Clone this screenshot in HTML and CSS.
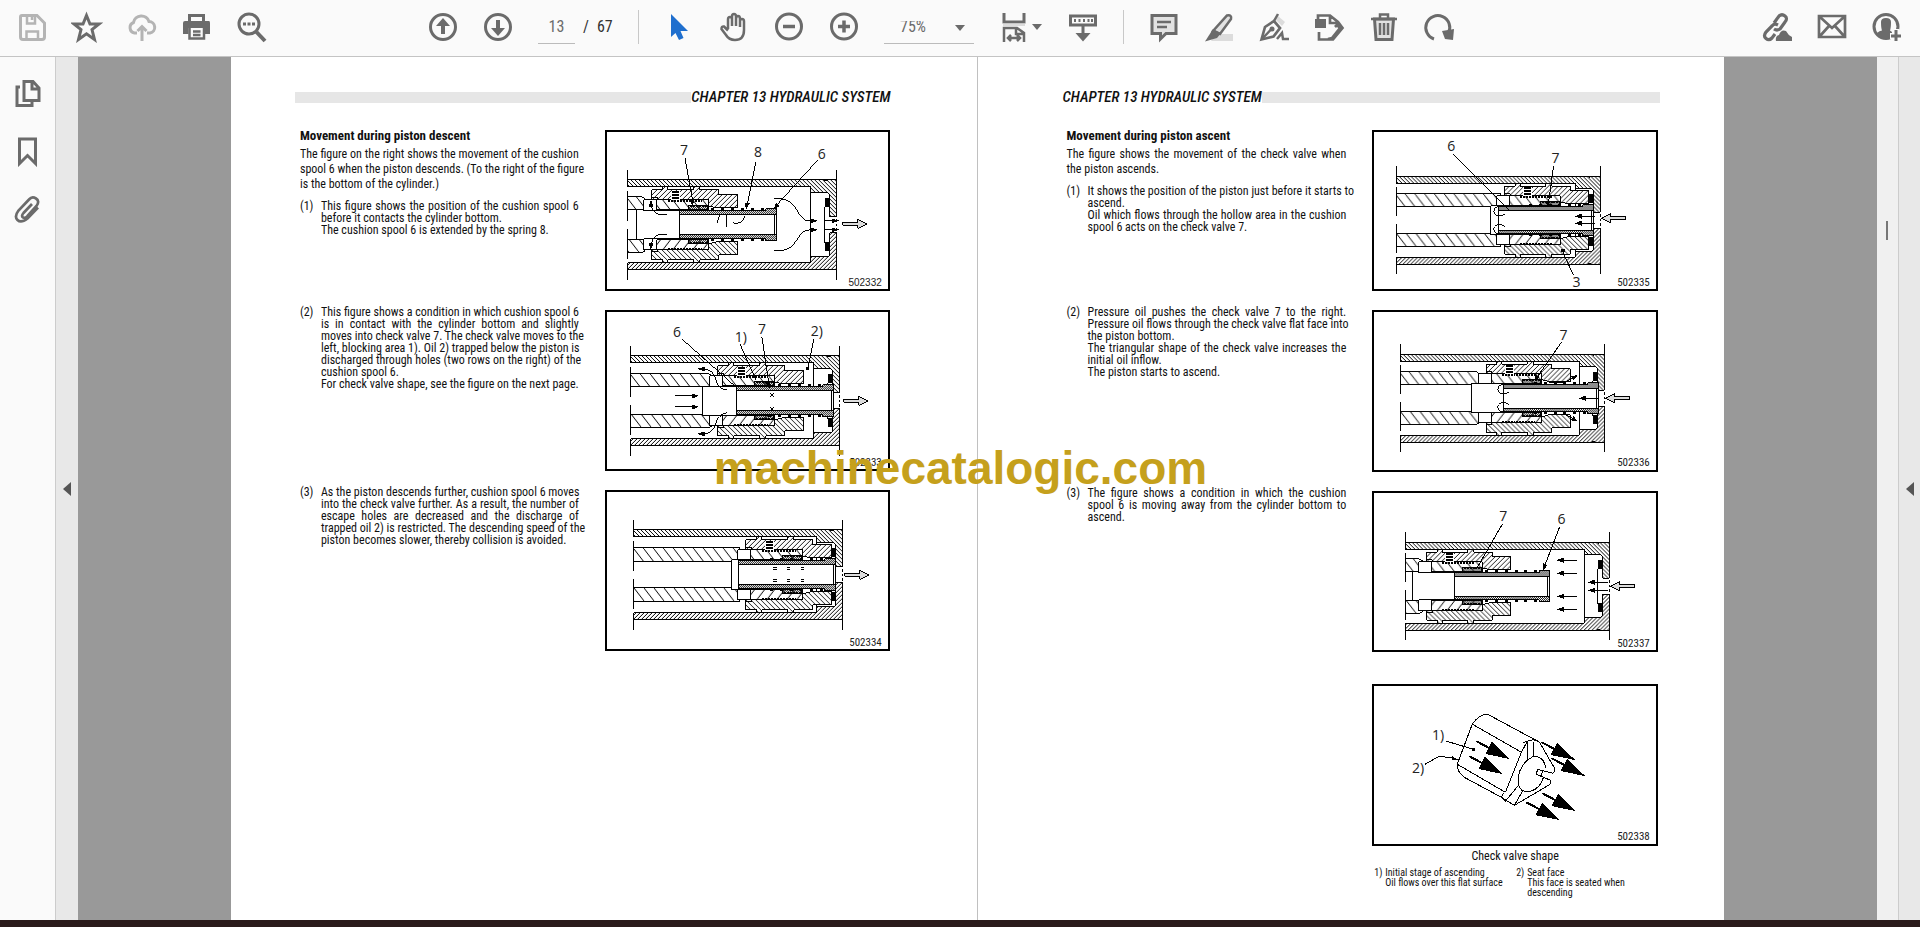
FILE: index.html
```html
<!DOCTYPE html>
<html lang="en">
<head>
<meta charset="utf-8">
<title>Chapter 13 Hydraulic System</title>
<link rel="stylesheet" href="styles.css">
</head>
<body>
<svg class="defs" aria-hidden="true">
  <defs>
    <pattern id="hx-wall" width="4" height="4" patternUnits="userSpaceOnUse"><path d="M-1 -1L5 5M-1 3L1 5M3 -1L5 1" stroke="#000" stroke-width="1"/></pattern>
    <pattern id="hx-head" width="5" height="5" patternUnits="userSpaceOnUse"><path d="M-1 6L6 -1M-1 1L1 -1M4 6L6 4" stroke="#000" stroke-width=".9"/></pattern>
    <pattern id="hx-rod" width="10" height="13" patternUnits="userSpaceOnUse"><path d="M0 0L10 13" stroke="#000" stroke-width="1"/></pattern>
    <pattern id="hx-dense" width="2" height="2" patternUnits="userSpaceOnUse"><path d="M0 2L2 0M-1 1L1 -1M1 3L3 1" stroke="#000" stroke-width=".9"/></pattern>

    <g id="tube-half">
      <path d="M0 -45H209V-8H202V-30L200 -32H183V-38H0Z" fill="url(#hx-wall)"/>
      <path d="M0 -45H196L198 -44L200 -45H209M209 -8H202V-30L200 -32H183V-38H0"/>
      <path d="M183 -38V0M197 0V-18H202M209 -45V-55M0 -55V-38M0 -34V-22M0 -18V-4"/>
      <path d="M209 -6V0" stroke-dasharray="3 2"/>
      <rect x="198" y="-26" width="3" height="8" fill="#000"/>
    </g>
    <g id="tube"><use href="#tube-half"/><use href="#tube-half" transform="scale(1 -1)"/></g>

    <g id="head-half">
      <path d="M-8 -25H57V-14H-8Z" fill="#fff"/>
      <path d="M5 -25H57V-15H5Z" fill="url(#hx-rod)"/>
      <path d="M0 -35H11V-38H16V-35H42V-38H48V-35H67V-30H86V-17H64L57 -19V-25H0Z" fill="#fff"/>
      <path d="M0 -35H11V-38H16V-35H42V-38H48V-35H67V-30H86V-17H64L57 -19V-25H0Z" fill="url(#hx-head)"/>
      <path d="M0 -27H6V-25"/>
      <path d="M16 -24H50" stroke-width="2" stroke-dasharray="2 1"/>
      <rect x="37" y="-19" width="19" height="5" fill="url(#hx-dense)"/>
      <path d="M38 -18H55M38 -15H55" stroke-dasharray="2 1"/>
    </g>
    <g id="head">
      <use href="#head-half"/><use href="#head-half" transform="scale(1 -1)"/>
      <rect x="19" y="-34" width="9" height="9" fill="#fff" stroke="none"/>
      <path d="M20 -33H27M20 -30H27M20 -27H27" stroke-width="2"/>
    </g>

    <g id="spool-half">
      <path d="M0 -14H86V-16H97V-10H0Z" fill="#fff"/>
      <path d="M0 -14H86V-16H97V-10H0Z" fill="url(#hx-dense)"/>
      <path d="M31 -15h3M41 -15h3M51 -15h3M61 -15h3M71 -15h3M81 -15h3" stroke-width="3"/>
    </g>
    <g id="spool">
      <rect x="0" y="-14" width="97" height="28" fill="#fff"/>
      <use href="#spool-half"/><use href="#spool-half" transform="scale(1 -1)"/>
      <path d="M95 -10V10"/>
    </g>

    <g id="tip" stroke="none" fill="#000"><path d="M0 0L-7 -2.5V2.5Z"/></g>
    <g id="flow"><path d="M0 0H22"/><use href="#tip" x="24"/></g>
    <g id="flow-in"><path d="M6 0H20"/><path d="M0 0L7 -2.5V2.5Z" fill="#000" stroke="none"/></g>
    <g id="port"><path d="M0 -1.5H15V-4.5L24 0L15 4.5V1.5H0Z" fill="#ddd"/></g>
    <g id="big" stroke="none" fill="#000"><path d="M0 -1H14V-7L38 0L14 7V1H0Z"/></g>
    <g id="curl"><path d="M8 -6C3 -3 -3 -5 -3 -9Q-3 -13 2 -14"/><path d="M8 6C3 3 -3 5 -3 9Q-3 13 2 14"/></g>
  </defs>
</svg>

<header class="toolbar">
  <div class="tools">
    <button class="tool faint" aria-label="Save"><svg viewBox="0 0 32 32"><path d="M4.500 6Q4.500 4.500 6 4.500H21L28.500 12V26Q28.500 28.500 26 28.500H7Q4.500 28.500 4.500 26Z"/><path d="M11 5V12.500H19V5M16 6V9M10.500 28V20.500H22V28" stroke-width="2.500"/></svg></button>
    <button class="tool" aria-label="Star"><svg viewBox="0 0 32 32"><path d="M15.500 4.500L19 13H28L21 18.500L23.500 28.500L15.500 22.800L7.500 28.500L10 18.500L3 13H12Z"/></svg></button>
    <button class="tool faint" aria-label="Upload to cloud"><svg viewBox="0 0 32 32"><path d="M11 22H8.500A5.500 5.500 0 0 1 7.500 11.500A8 8 0 0 1 23 10.500A5.800 5.800 0 0 1 24 22H21M16 30V17M11.500 20L16 15.500L20.500 20"/></svg></button>
    <button class="tool" aria-label="Print"><svg viewBox="0 0 32 32"><path d="M8.500 10V4.500H22.500V10"/><path class="fill" d="M4 10H28Q29 10 29 12V23H24V17H7.500V23H2V12Q2 10 4 10Z"/><path d="M8.500 17V27.500H23V17M12 20.500H19.500M12 24H19.500" stroke-width="2.500"/></svg></button>
    <button class="tool" aria-label="Find"><svg viewBox="0 0 32 32"><circle cx="13" cy="13" r="10"/><path d="M20.500 21L29 30" stroke-width="4"/><path class="fill" d="M7 11.500h3v3H7zM11.500 11.500h3v3h-3zM16 11.500h3v3h-3z"/></svg></button>
  </div>
  <div class="tools">
    <button class="tool" aria-label="Previous page"><svg viewBox="0 0 32 32"><circle cx="16" cy="16" r="12.500"/><path d="M16 23V11" stroke-width="4"/><path class="fill" d="M16 7L23 15H9Z"/></svg></button>
    <button class="tool" aria-label="Next page"><svg viewBox="0 0 32 32"><circle cx="16" cy="16" r="12.500"/><path d="M16 9V20" stroke-width="4"/><path class="fill" d="M16 25L23 17H9Z"/></svg></button>
    <label class="pager"><input class="page-no" type="text" value="13" aria-label="Page number"><span class="slash">/</span><span>67</span></label>
  </div>
  <div class="tools divided">
    <button class="tool" aria-label="Select"><svg viewBox="0 0 32 32"><path class="blue" d="M8 3V26L12.500 22L16 29L20.500 27L17.500 20H25Z"/></svg></button>
    <button class="tool" aria-label="Hand"><svg viewBox="0 0 32 32"><path d="M10 18V8.500Q10 6 12 6T14 8.500V15M14 8V5.500Q14 3 16 3T18 5.500V15M18 8Q18 5 20 5T22 8V16M22 10Q22 8 24 8T26 10.500V19Q26 29 17 29Q11 29 8 24L3.500 18Q3.500 15 6 15.500L10 19.500" stroke-width="2.500"/></svg></button>
    <button class="tool" aria-label="Zoom out"><svg viewBox="0 0 32 32"><circle cx="16" cy="15.500" r="12.500"/><path d="M10 15.500H22" stroke-width="3.500"/></svg></button>
    <button class="tool" aria-label="Zoom in"><svg viewBox="0 0 32 32"><circle cx="16" cy="15.500" r="12.500"/><path d="M10 15.500H22M16 9.500V21.500" stroke-width="3.500"/></svg></button>
    <span class="zoom"><select aria-label="Zoom level"><option>75%</option></select></span>
    <button class="tool wide" aria-label="Fit page"><svg viewBox="0 0 32 32"><path d="M6 2V11H26V2" /><path class="soft" d="M5 12.500H27V15H5Z"/><path d="M6 31V17H19L26 22V31M18 17V23H26M11 27H21M13 24L10 27L13 30M19 24L22 27L19 30" stroke-width="2.500"/></svg><span class="caret"></span></button>
    <button class="tool" aria-label="Scrolling"><svg viewBox="0 0 32 32"><rect x="3.500" y="5" width="25" height="9"/><path d="M8 8V11M12.500 8V11M17 8V11M21.500 8V11M25 8V11" stroke-width="2"/><path d="M16 14V25" /><path class="fill" d="M8.500 22H23.500L16 30.500Z"/></svg></button>
  </div>
  <div class="tools divided">
    <button class="tool" aria-label="Comment"><svg viewBox="0 0 32 32"><path class="tint" d="M4 4.500H28V22.500H18L12.500 28V22.500H4Z"/><path d="M9 11H23M9 16H19" stroke-width="2.500"/></svg></button>
    <button class="tool" aria-label="Highlight"><svg viewBox="0 0 32 32"><path class="soft" d="M13 23H30V30H8Z"/><path class="tint" d="M24 4.500Q29 3.500 28 8L17 23L10 20Z" stroke-width="2.500"/><path class="fill" d="M10 18L18 22L14 27L2 30.500Z"/></svg></button>
    <button class="tool" aria-label="Sign"><svg viewBox="0 0 32 32"><path class="soft" d="M20 5L27 11L24 15L18 9Z"/><path d="M3.500 28.500L7 16L16 10L22 17L15.500 25.500Z" stroke-width="2.700"/><path d="M4 28L13 18.500M16 10L20 3M19 28L24 22L25 28H31" stroke-width="2.500"/><circle class="fill" cx="14" cy="18" r="2.500"/></svg></button>
    <button class="tool" aria-label="Stamp"><svg viewBox="0 0 32 32"><path class="fill" d="M2 8H13V17H2Z"/><path d="M5 9V4.500H17L25 11L29.500 17L20 28.500H6V21M17 5V12H24M22 16L24 14L27 17L19 27L15 28" stroke-width="2.700"/></svg></button>
    <button class="tool" aria-label="Delete"><svg viewBox="0 0 32 32"><path class="tint" d="M6.500 8H25.500L24 28.500H8Z"/><path d="M3 8H29M12 7V3.500H20V7M12 12V24M16 12V24M20 12V24" stroke-width="2.500"/></svg></button>
    <button class="tool" aria-label="Rotate"><svg viewBox="0 0 32 32"><path d="M11 28A12 12 0 1 1 25.500 22"/><path class="fill" d="M19 20L31 18L30 29L22 28Z"/></svg></button>
  </div>
  <div class="tools share">
    <button class="tool" aria-label="Share link"><svg viewBox="0 0 32 32"><path d="M13 12L18 5Q21 2.500 24 5T24 11L19 18Q16 20 13 18M17 14Q13 12 11 15L5 21Q2 25 5 27.500T11 27L14 23" stroke-width="3.200"/><path class="fill" d="M15 30Q14 25 18 24Q20 18 25 20Q27 24 31 26V30Z"/></svg></button>
    <button class="tool" aria-label="Email"><svg viewBox="0 0 32 32"><path d="M3 5H29V26H3ZM4 6L16 17L28 6M4 25L13 15M28 25L19 15" stroke-width="2.700"/></svg></button>
    <button class="tool" aria-label="Add person"><svg viewBox="0 0 32 32"><circle cx="15" cy="15.500" r="12"/><path class="fill" d="M6 24Q5 21 11 19.500Q10 17 10 11Q10 7 15 7T20 11Q20 17 19 19.500L21 21V27H10Z"/><path d="M25 18V31M19 25H31" stroke="#fafafa" stroke-width="6"/><path d="M25 19V30M20 25H30"/></svg></button>
  </div>
</header>

<div class="workspace">
  <nav class="rail">
    <button class="tool" aria-label="Page thumbnails"><svg viewBox="0 0 32 32"><path d="M12 4.500H21L27 11V23.500H12ZM20 5V12H27M8 10H5V28.500H20V25"/></svg></button>
    <button class="tool" aria-label="Bookmarks"><svg viewBox="0 0 32 32"><path d="M7.500 4H23.500V28.500L15.500 20.500L7.500 28.500Z"/></svg></button>
    <button class="tool" aria-label="Attachments"><svg viewBox="0 0 32 32"><path d="M20 11L11.500 20Q9 23 11 24.500T15.500 23L24.500 13Q28 8 24 5.500T17 6.500L6.500 17.500Q2 23.500 5.500 27T15.500 25.500L26 14.500" stroke-width="2.700"/></svg></button>
  </nav>
  <button class="edge" aria-label="Open navigation pane"><span class="arrow"></span></button>

  <main class="viewer">
    <div class="spread">
      <article class="page left">
        <header class="running"><span class="bar"></span><h1>CHAPTER 13 HYDRAULIC SYSTEM</h1></header>
        <div class="content">
          <section class="row">
            <div>
              <h2>Movement during piston descent</h2>
              <p class="intro"><span class="j">The figure on the right shows the movement of the cushion</span><span class="j">spool 6 when the piston descends. (To the right of the figure</span><span>is the bottom of the cylinder.)</span></p>
              <div class="item"><span>(1)</span><p><span class="j">This figure shows the position of the cushion spool 6</span><span>before it contacts the cylinder bottom.</span><span>The cushion spool 6 is extended by the spring 8.</span></p></div>
            </div>
            <figure>
              <svg class="drawing" viewBox="2 2 281 157">
                <g transform="translate(23 95)">
                  <use href="#tube"/>
                  <path d="M0 -28H14L17 -26V-15H0ZM0 28H14L17 26V15H0Z" fill="url(#hx-rod)"/><path d="M0 -15H9V15H0M9 -15H60M9 15H60"/>
                </g>
                <use href="#head" x="47" y="95"/><use href="#spool" x="75" y="95"/>
                <path d="M62 84C54 86 47 84 46 73M62 105C54 103 47 105 46 117M80 28L88 72M151 32L142 76M213 30L171 76"/>
                <path d="M169 69C195 66 190 91 205 91M169 121C195 123 190 100 205 100M112 93L115 85M122 85V97M128 93Q138 95 140 86"/>
                <path class="solid" d="M46 70l-2.500 7h5zM46 120l-2.500 -7h5zM88 76l-4 -6h5zM141 80l-1 -7h5zM169 79l2 -6 4 3z"/>
                <use href="#tip" x="213" y="91"/><use href="#tip" x="213" y="100"/><path d="M220 91H234M220 100H234"/><use href="#tip" x="234" y="91"/><use href="#tip" x="234" y="100"/>
                <use href="#port" x="238" y="94"/>
                <text x="79" y="25">7</text><text x="153" y="27">8</text><text x="217" y="29">6</text>
                <text class="code arial" x="277" y="156">502332</text>
              </svg>
            </figure>
          </section>
          <section class="row">
            <div class="item"><span>(2)</span><p><span class="j">This figure shows a condition in which cushion spool 6</span><span class="j">is in contact with the cylinder bottom and slightly</span><span class="j">moves into check valve 7. The check valve moves to the</span><span class="j">left, blocking area 1). Oil 2) trapped below the piston is</span><span class="j">discharged through holes (two rows on the right) of the</span><span>cushion spool 6.</span><span>For check valve shape, see the figure on the next page.</span></p></div>
            <figure>
              <svg class="drawing" viewBox="2 2 281 157">
                <g transform="translate(26 91)">
                  <use href="#tube"/>
                  <path d="M0 -27H78L83 -24V-14H0ZM0 27H78L83 24V14H0Z" fill="url(#hx-rod)"/>
                </g>
                <use href="#head" x="113" y="91"/>
                <path d="M133 77H98V106H133" fill="#fff"/>
                <use href="#spool" x="132" y="91"/>
                <path d="M122 80C106 78 116 60 98 59M122 103C106 105 116 123 98 124M77 29L131 77M135 34L151 70M157 27L164 74M209 29L203 58"/>
                <path class="solid" d="M92 59l8 -2.500v5zM92 124l8 -2.500v5zM165 78l-5 -6h5zM201 57h3v3h-3z"/>
                <use href="#flow" x="70" y="86"/><use href="#flow" x="70" y="97"/>
                <path d="M165 83l4 4M169 83l-4 4M165 97l4 4M169 97l-4 4"/>
                <use href="#port" x="239" y="91"/>
                <text x="72" y="27">6</text><text x="136" y="32">1)</text><text x="157" y="24">7</text><text x="212" y="26">2)</text>
                <text class="code" x="277" y="156">502333</text>
              </svg>
            </figure>
          </section>
          <section class="row">
            <div class="item"><span>(3)</span><p><span class="j">As the piston descends further, cushion spool 6 moves</span><span class="j">into the check valve further. As a result, the number of</span><span class="j">escape holes are decreased and the discharge of</span><span class="j">trapped oil 2) is restricted. The descending speed of the</span><span>piston becomes slower, thereby collision is avoided.</span></p></div>
            <figure>
              <svg class="drawing" viewBox="2 2 281 157">
                <g transform="translate(29 85)">
                  <use href="#tube"/>
                  <path d="M0 -27H106V-13H0ZM0 27H106V13H0Z" fill="url(#hx-rod)"/>
                </g>
                <use href="#head" x="141" y="85"/>
                <path d="M150 70H127V100H150" fill="#fff"/>
                <use href="#spool" x="134" y="85"/>
                <path d="M168 78h4M168 80h4M182 78h3M182 80h3M196 78h3M196 80h3M168 90h4M168 92h4M182 90h3M182 92h3M196 90h3M196 92h3"/>
                <use href="#port" x="240" y="85"/>
                <text class="code" x="277" y="156">502334</text>
              </svg>
            </figure>
          </section>
        </div>
      </article>

      <article class="page right">
        <header class="running"><h1>CHAPTER 13 HYDRAULIC SYSTEM</h1><span class="bar"></span></header>
        <div class="content">
          <section class="row">
            <div>
              <h2>Movement during piston ascent</h2>
              <p class="intro"><span class="j">The figure shows the movement of the check valve when</span><span>the piston ascends.</span></p>
              <div class="item"><span>(1)</span><p><span class="j">It shows the position of the piston just before it starts to</span><span>ascend.</span><span class="j">Oil which flows through the hollow area in the cushion</span><span>spool 6 acts on the check valve 7.</span></p></div>
            </div>
            <figure>
              <svg class="drawing" viewBox="2 2 281 157">
                <g transform="translate(24 90) scale(.975)">
                  <use href="#tube"/>
                  <path d="M0 -27H107V-14H0ZM0 27H107V14H0Z" fill="url(#hx-rod)"/>
                  <use href="#head" x="111" y="0"/>
                  <path d="M118 -15H97V15H118" fill="#fff"/>
                  <use href="#spool" x="105" y="0"/><use href="#curl" x="103"/>
                </g>
                <path d="M81 24L137 80M181 36L176 73M201 145L190 121"/>
                <path class="solid" d="M188 119h4v3h-4zM175 77l-2 -6h5z"/>
                <use href="#flow-in" x="202" y="86"/><use href="#flow-in" x="202" y="93"/>
                <use href="#port" transform="translate(253 88) scale(-1 1)"/>
                <text x="79" y="21">6</text><text x="183" y="33">7</text><text x="204" y="157">3</text>
                <text class="code" x="277" y="156">502335</text>
              </svg>
            </figure>
          </section>
          <section class="row">
            <div class="item"><span>(2)</span><p><span class="j">Pressure oil pushes the check valve 7 to the right.</span><span class="j">Pressure oil flows through the check valve flat face into</span><span>the piston bottom.</span><span class="j">The triangular shape of the check valve increases the</span><span>initial oil inflow.</span><span>The piston starts to ascend.</span></p></div>
            <figure>
              <svg class="drawing" viewBox="2 2 281 157">
                <g transform="translate(28 88) scale(.975)">
                  <use href="#tube"/>
                  <path d="M0 -27H78L83 -24V-14H0ZM0 27H78L83 24V14H0Z" fill="url(#hx-rod)"/>
                  <use href="#head" x="88" y="0"/>
                  <path d="M108 -15H73V15H108" fill="#fff"/>
                  <use href="#spool" x="106" y="0"/><use href="#curl" x="103"/>
                </g>
                <path d="M189 32L164 68M176 72H192L202 67M176 104H192L202 109"/>
                <path class="solid" d="M162 71l1 -7 4 3zM205 65l-7 1 3 4zM205 111l-7 -1 3 -4z"/>
                <use href="#flow-in" x="206" y="88"/>
                <use href="#port" transform="translate(257 88) scale(-1 1)"/>
                <text x="191" y="30">7</text>
                <text class="code" x="277" y="156">502336</text>
              </svg>
            </figure>
          </section>
          <section class="row">
            <div class="item"><span>(3)</span><p><span class="j">The figure shows a condition in which the cushion</span><span class="j">spool 6 is moving away from the cylinder bottom to</span><span>ascend.</span></p></div>
            <figure>
              <svg class="drawing" viewBox="2 2 281 157">
                <g transform="translate(33 95) scale(.975)">
                  <use href="#tube"/>
                  <path d="M0 -28H14L18 -26V-15H0ZM0 28H14L18 26V15H0Z" fill="url(#hx-rod)"/><path d="M0 -15H8V15H0M8 -15H60M8 15H60"/>
                  <use href="#head" x="22" y="0"/><use href="#spool" x="51" y="0"/>
                </g>
                <path d="M130 33L104 78M187 36L172 75"/>
                <path class="solid" d="M171 79l0 -7 4 2z"/>
                <use href="#flow-in" x="184" y="69"/><use href="#flow-in" x="184" y="82"/><use href="#flow-in" x="184" y="105"/><use href="#flow-in" x="184" y="118"/>
                <use href="#flow-in" x="215" y="91"/><use href="#flow-in" x="215" y="99"/>
                <use href="#port" transform="translate(262 95) scale(-1 1)"/>
                <text x="131" y="30">7</text><text x="189" y="33">6</text>
                <text class="code" x="277" y="156">502337</text>
              </svg>
            </figure>
          </section>
          <section class="row shape">
            <figure>
              <svg class="drawing" viewBox="2 2 281 157">
                <path d="M100 40Q106 31 115 30L167 58M100 40L149 68M100 40L85 80L133 108M85 80Q85 88 92 93L129 113L142 121M149 68L133 108M149 68L155 57L150 59M155 57V76Q144 86 146 101L133 117L129 113L131 109"/>
                <path d="M155 57Q162 54 167 58L182 84Q183 88 180 89L165 85L164 90L171 93L178 96Q179 99 176 101L142 121L150 107L146 101M161 58V72M155 76L161 72M161 72Q172 72 173 84M146 101Q150 109 158 107Q168 104 171 93M170 86L169 92"/>
                <path d="M74 57L101 65M53 80L67 72L82 74"/>
                <path class="solid" d="M87 76l-7 -4v4zM100 64h3v3h-3z"/>
                <g>
                  <use href="#big" transform="translate(104 57) rotate(28)"/><use href="#big" transform="translate(97 72) rotate(28)"/>
                  <use href="#big" transform="translate(169 58) rotate(28)"/><use href="#big" transform="translate(179 74) rotate(28)"/>
                  <use href="#big" transform="translate(170 109) rotate(28)"/><use href="#big" transform="translate(154 118) rotate(28)"/>
                </g>
                <text x="66" y="56">1)</text><text x="46" y="89">2)</text>
                <text class="code" x="277" y="156">502338</text>
              </svg>
              <figcaption>Check valve shape</figcaption>
              <div class="legend">
                <div class="note"><span>1)</span><p>Initial stage of ascending<br>Oil flows over this flat surface</p></div>
                <div class="note"><span>2)</span><p>Seat face<br>This face is seated when<br>descending</p></div>
              </div>
            </figure>
          </section>
        </div>
      </article>
    </div>
    <div class="watermark">machinecatalogic.com</div>
  </main>

  <div class="scroll"><span class="thumb"></span></div>
  <button class="edge end" aria-label="Open tools pane"><span class="arrow"></span></button>
</div>
<footer class="taskbar"></footer>
</body>
</html>
```

FILE: styles.css
```css
* { box-sizing: border-box; }
body {
  margin: 0;
  height: 100vh;
  display: flex;
  flex-direction: column;
  overflow: hidden;
  background: #fafafa;
  color: #111;
  font: 12px/12px "Roboto Condensed", Roboto, "Noto Sans", sans-serif;
}
h1, h2, p, figure { margin: 0; }
.defs { position: absolute; width: 0; height: 0; }

/* Toolbar */
.toolbar {
  display: flex;
  align-items: center;
  height: 57px;
  flex: none;
  padding: 0 6px 2px 4px;
  border-bottom: 1px solid #c4c4c4;
}
.tools { display: flex; align-items: center; height: 54px; }
.tools:nth-child(2) { margin-left: 136px; }
.share { margin-left: auto; }
.divided { position: relative; margin-left: 13px; padding-left: 13px; }
.divided::before { content: ""; position: absolute; left: 0; top: 10px; bottom: 10px; width: 1px; background: #c8c8c8; }
.tool {
  width: 55px;
  height: 54px;
  padding: 0;
  border: 0;
  background: none;
  color: #6b6b6b;
  display: flex;
  align-items: center;
  justify-content: center;
}
.tool svg { width: 32px; height: 32px; fill: none; stroke: currentColor; stroke-width: 3; }
.tool svg .fill { fill: currentColor; stroke: none; }
.tool svg .tint { fill: #e2e2e2; }
.tool svg .soft { fill: #dcdcdc; stroke: none; }
.tool svg .blue { fill: #1f6fce; stroke: none; }
.faint { color: #b4b4b4; }
.wide { width: 70px; gap: 2px; }
.caret { border: 5px solid transparent; border-top: 6px solid #6b6b6b; border-bottom: 0; }
.pager { display: flex; align-items: center; width: 100px; padding-left: 13px; font-size: 16px; color: #333; }
.page-no {
  width: 37px;
  height: 34px;
  padding: 0;
  border: 0;
  border-bottom: 1px solid #bbb;
  background: none;
  color: #6b6b6b;
  font: inherit;
  text-align: center;
}
.slash { margin: 0 8px; }
.zoom { position: relative; margin: 0 11px 0 13px; }
.zoom::after { content: ""; position: absolute; right: 9px; top: 15px; border: 5px solid transparent; border-top: 6px solid #6b6b6b; border-bottom: 0; }
.zoom select {
  appearance: none;
  width: 90px;
  height: 34px;
  padding: 0 0 0 16px;
  border: 0;
  border-bottom: 1px solid #bbb;
  border-radius: 0;
  background: none;
  color: #6b6b6b;
  font: inherit;
  font-size: 16px;
}

/* Panes around the document */
.workspace { flex: 1; min-height: 0; display: flex; }
.rail { width: 55px; padding-top: 9px; display: flex; flex-direction: column; gap: 4px; }
.edge { width: 23px; padding: 0; border: 0; border-left: 1px solid #ccc; background: #e8e8e8; display: flex; align-items: center; justify-content: center; }
.edge.end { width: 22px; }
.arrow { border: 7px solid transparent; border-right: 8px solid #555; border-left: 0; }
.scroll { width: 21px; background: #f0f0f0; padding-top: 164px; }
.thumb { display: block; width: 2px; height: 19px; margin-left: 9px; background: #777; }
.taskbar { height: 7px; flex: none; background: #2a1b1b; }

/* Document */
.viewer { position: relative; flex: 1; min-width: 0; overflow: hidden; background: #999; }
.spread { display: grid; grid-template-columns: minmax(0, 1fr) minmax(0, 1fr); width: 83%; height: 100%; margin: 0 auto; background: #fff; }
.page { padding: 35px 64px 0 85px; }
.page.left { padding: 35px 86px 0 64px; border-right: 1px solid #c0c0c0; }
.running { display: flex; height: 11px; align-items: center; }
.bar { flex: 1; height: 11px; background: #e6e6e6; }
h1 { font: italic 500 15px/15px "Roboto Condensed", Roboto, sans-serif; white-space: nowrap; }
.content { padding: 27px 1px 0 5px; display: grid; grid-template-columns: minmax(0, 1fr); gap: 19px; }
.page.right .content { padding: 27px 2px 0 4px; }
.row { display: grid; grid-template-columns: minmax(0, 279fr) minmax(0, 285fr); gap: 26px; align-items: start; }
.row > .item { margin-top: -4px; }
.item { display: grid; grid-template-columns: 21px minmax(0, 1fr); margin-top: 8px; }
.row p span { display: block; white-space: nowrap; }
.row p .j { text-align-last: justify; }
h2 { font-size: 13px; line-height: 16px; font-weight: 700; margin-top: -2px; }
.intro { line-height: 15px; margin-top: 3px; }
.drawing { display: block; width: 100%; border: 2px solid #000; fill: none; stroke: #000; stroke-width: 1; shape-rendering: crispEdges; }
.drawing .solid { fill: #000; stroke: none; }
.drawing text { font: 14px "Open Sans", "Noto Sans", sans-serif; fill: #222; stroke: none; text-anchor: middle; }
.drawing .code { font: 11px "Roboto Condensed", Roboto, sans-serif; text-anchor: end; }
.drawing .arial { font: 10px "Liberation Sans", Arial, sans-serif; }
.shape { margin-top: 13px; }
.shape figure { grid-column: 2; }
figcaption { margin-top: 3px; text-align: center; font-size: 12px; line-height: 14px; }
.legend { display: grid; grid-template-columns: 1fr 1fr; margin-top: 5px; padding-left: 2px; font-size: 10px; line-height: 10px; white-space: nowrap; }
.note { display: grid; grid-template-columns: 11px 1fr; }
.watermark {
  position: absolute;
  left: 0;
  right: 0;
  top: 385px;
  padding-right: 34px;
  text-align: center;
  font: 700 46px/52px "Liberation Sans", Arial, sans-serif;
  color: #c5a01c;
  pointer-events: none;
}
```
